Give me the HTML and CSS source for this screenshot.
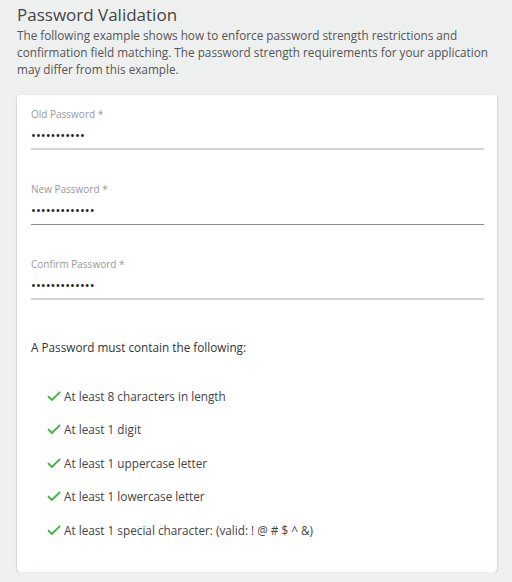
FILE: index.html
```html
<!DOCTYPE html>
<html lang="en">
<head>
<meta charset="utf-8">
<title>Password Validation</title>
<link rel="stylesheet" href="styles.css">
</head>
<body>
<h1 class="title">Password Validation</h1>
<p class="desc">The following example shows how to enforce password strength restrictions and confirmation field matching. The password strength requirements for your application may differ from this example.</p>
<div class="card">
  <label class="field">
    <span class="label">Old Password *</span>
    <input class="input" type="password" value="abcdefghijk">
  </label>
  <label class="field field-hover">
    <span class="label">New Password *</span>
    <input class="input" type="password" value="abcdefghijklm">
  </label>
  <label class="field">
    <span class="label">Confirm Password *</span>
    <input class="input" type="password" value="abcdefghijklm">
  </label>
  <p class="intro">A Password must contain the following:</p>
  <ul class="rules">
    <li class="rule"><svg class="check" viewBox="0 0 14 10" width="14" height="10"><path d="M1 5.2 L4.8 9 L13.2 0.8"/></svg><span>At least 8 characters in length</span></li>
    <li class="rule"><svg class="check" viewBox="0 0 14 10" width="14" height="10"><path d="M1 5.2 L4.8 9 L13.2 0.8"/></svg><span>At least 1 digit</span></li>
    <li class="rule"><svg class="check" viewBox="0 0 14 10" width="14" height="10"><path d="M1 5.2 L4.8 9 L13.2 0.8"/></svg><span>At least 1 uppercase letter</span></li>
    <li class="rule"><svg class="check" viewBox="0 0 14 10" width="14" height="10"><path d="M1 5.2 L4.8 9 L13.2 0.8"/></svg><span>At least 1 lowercase letter</span></li>
    <li class="rule"><svg class="check" viewBox="0 0 14 10" width="14" height="10"><path d="M1 5.2 L4.8 9 L13.2 0.8"/></svg><span>At least 1 special character: (valid: ! @ # $ ^ &amp;)</span></li>
  </ul>
</div>
</body>
</html>
```
FILE: styles.css
```css
html, body {
  margin: 0;
  padding: 0;
}
body {
  background: #eef0ef;
  font-family: "Open Sans", "Liberation Sans", sans-serif;
  padding: 3px 15px 0 17px;
  color: #444;
}
.title {
  margin: 0;
  font-size: 17px;
  font-weight: 400;
  line-height: 24px;
  color: #444;
}
.desc {
  margin: 0 0 17px;
  font-size: 11.75px;
  line-height: 17px;
  color: #555;
}
.card {
  background: #fff;
  border-radius: 3px;
  box-shadow: 0 1px 2px rgba(0, 0, 0, 0.35);
  padding: 12px 13px 25px 14px;
}
.field {
  display: flex;
  flex-direction: column;
  border-bottom: 2px solid #d4d4d4;
  margin-bottom: 32px;
}
.field-hover {
  border-bottom: 1px solid #8c8c8c;
  padding-bottom: 1px;
}
.label {
  font-size: 10px;
  line-height: 14px;
  color: #999;
}
.input {
  border: none;
  outline: none;
  padding: 0;
  margin: 0;
  height: 27px;
  font-family: "Open Sans", sans-serif;
  font-size: 13px;
  color: #222;
  background: transparent;
  width: 100%;
}
.intro {
  margin: 39px 0 24px;
  font-size: 11.75px;
  line-height: 16px;
  color: #333;
}
.rules {
  list-style: none;
  margin: 0;
  padding: 0 0 0 16px;
}
.rule {
  display: flex;
  align-items: center;
  gap: 3px;
  height: 33.5px;
  font-size: 11.75px;
  color: #444;
}
.check {
  fill: none;
  stroke: #3cb53c;
  stroke-width: 1.8;
  flex: none;
}
```
